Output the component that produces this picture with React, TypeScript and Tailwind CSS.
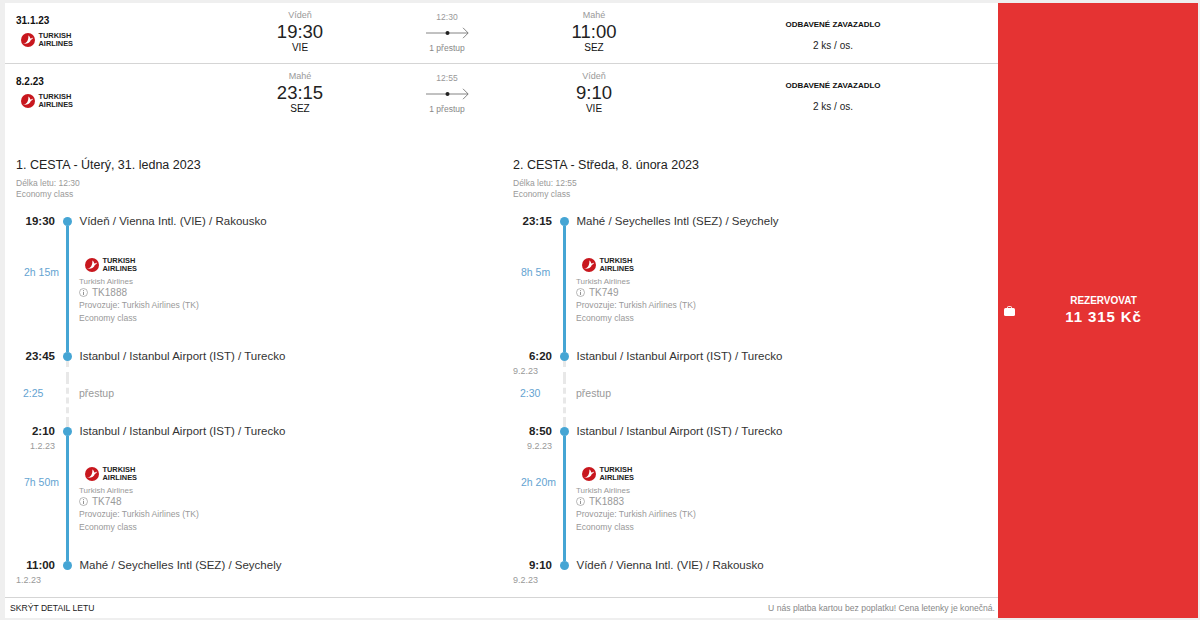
import React from 'react';

interface Leg {
  from: string;
  time: string;
  date?: string;
  duration: string;
  flight: string;
  topPad: string;
  legHeight: string;
}

interface Journey {
  title: string;
  length: string;
  legs: Leg[];
  transfer: { time: string; date?: string };
  transferTime: string;
  end: { time: string; date: string; place: string };
}

const IST = 'Istanbul / Istanbul Airport (IST) / Turecko';
const VIE = 'Vídeň / Vienna Intl. (VIE) / Rakousko';
const SEZ_OUT = 'Mahé / Seychelles Intl (SEZ) / Seychely';

const journeys: Journey[] = [
  {
    title: '1. CESTA - Úterý, 31. ledna 2023',
    length: 'Délka letu: 12:30',
    transfer: { time: '23:45' },
    transferTime: '2:25',
    legs: [
      { from: VIE, time: '19:30', duration: '2h 15m', flight: 'TK1888', topPad: 'pt-[1px]', legHeight: 'h-[105px]' },
      { from: IST, time: '2:10', date: '1.2.23', duration: '7h 50m', flight: 'TK748', topPad: 'pt-0', legHeight: 'h-[104px]' },
    ],
    end: { time: '11:00', date: '1.2.23', place: SEZ_OUT },
  },
  {
    title: '2. CESTA - Středa, 8. února 2023',
    length: 'Délka letu: 12:55',
    transfer: { time: '6:20', date: '9.2.23' },
    transferTime: '2:30',
    legs: [
      { from: SEZ_OUT, time: '23:15', duration: '8h 5m', flight: 'TK749', topPad: 'pt-[1px]', legHeight: 'h-[105px]' },
      { from: IST, time: '8:50', date: '9.2.23', duration: '2h 20m', flight: 'TK1883', topPad: 'pt-0', legHeight: 'h-[104px]' },
    ],
    end: { time: '9:10', date: '9.2.23', place: VIE },
  },
];

const TurkishLogo = () => (
  <div className="flex items-center gap-[3.5px] h-[15px]">
    <svg width="14" height="14" viewBox="0 0 14 14" className="shrink-0">
      <circle cx="7" cy="7" r="7" fill="#c8171e" />
      <path d="M2.400 10.600C5.400 10.200 7.600 7.600 7.400 2.400c1 .6 1.600 1.700 1.900 3 .9-.1 1.900-.4 2.900-1-.4 1.100-1.200 2-2.400 2.500-.7 2.600-3.800 4.500-7.800 3.700z" fill="#fff" />
    </svg>
    <div className="font-['Liberation_Sans',sans-serif] font-bold text-[7.4px] leading-[7.5px] text-[#222]">
      <div>TURKISH</div>
      <div>AIRLINES</div>
    </div>
  </div>
);

const FlightArrow = () => (
  <svg width="43" height="12" viewBox="0 0 43 12">
    <path d="M0 6h42M37 .8l5.200 5.200-5.200 5.200" fill="none" stroke="#666" strokeWidth="0.8" />
    <circle cx="21.500" cy="6" r="2" fill="#222" />
  </svg>
);

const Endpoint = ({ city, time, code }: { city: string; time: string; code: string }) => (
  <div className="flex flex-col items-center">
    <span className="text-[9px] leading-[13px] text-[#999]">{city}</span>
    <span className="text-[18.5px] leading-[20px] text-[#222]">{time}</span>
    <span className="text-[10px] leading-[12px] text-[#111]">{code}</span>
  </div>
);

const SummaryRow = ({ date, dep, arr, length, border }: {
  date: string;
  dep: string[];
  arr: string[];
  length: string;
  border?: boolean;
}) => (
  <div className={border ? 'flex h-[61px] border-b border-[#d5d5d5]' : 'flex h-[61px]'}>
    <div className="w-[221px] pl-[11px] pt-[12px]">
      <div className="text-[10px] leading-[12px] font-bold text-[#111]">{date}</div>
      <div className="pl-[5px] pt-[5px]"><TurkishLogo /></div>
    </div>
    <div className="w-[148px] pt-[6px]">
      <Endpoint city={dep[0]} time={dep[1]} code={dep[2]} />
    </div>
    <div className="w-[146px] pt-[8px] flex flex-col items-center">
      <span className="text-[8.5px] leading-[12px] text-[#999]">{length}</span>
      <div className="h-[19px] flex items-center"><FlightArrow /></div>
      <span className="text-[8.5px] leading-[12px] text-[#888]">1 přestup</span>
    </div>
    <div className="w-[148px] pt-[6px]">
      <Endpoint city={arr[0]} time={arr[1]} code={arr[2]} />
    </div>
    <div className="flex-1 pt-[16px] flex flex-col items-center">
      <span className="text-[8px] leading-[12px] font-bold text-[#111]">ODBAVENÉ ZAVAZADLO</span>
      <span className="text-[10px] leading-[12px] mt-[9px] text-[#222]">2 ks / os.</span>
    </div>
  </div>
);

const InfoIcon = () => (
  <svg width="9" height="9" viewBox="0 0 9 9" className="shrink-0">
    <circle cx="4.500" cy="4.500" r="4" fill="none" stroke="#999" strokeWidth="0.7" />
    <path d="M4.500 2v.9M4.500 3.800v3.200" stroke="#888" strokeWidth="0.9" />
  </svg>
);

const Stop = ({ time, date, dateLeft, place, above, below }: {
  time: string;
  date?: string;
  dateLeft?: boolean;
  place: string;
  above: string;
  below: string;
}) => (
  <div className="flex h-[30px]">
    <div className={dateLeft ? 'w-[40px] shrink-0 pr-[1px] flex flex-col' : 'w-[40px] shrink-0 pr-[1px] flex flex-col items-end'}>
      <span className="self-end text-[11.5px] leading-[16px] font-bold text-[#222]">{time}</span>
      {date && <span className="mt-[1px] text-[9px] leading-[12px] text-[#999]">{date}</span>}
    </div>
    <div className="w-[23px] shrink-0 flex flex-col items-center">
      <div className={above} />
      <div className="w-[9px] h-[9px] rounded-full bg-[#45a5d4] shrink-0" />
      <div className={below} />
    </div>
    <div className="pl-[0.5px] text-[11.5px] leading-[16px] text-[#333] whitespace-nowrap">{place}</div>
  </div>
);

const LegRow = ({ leg }: { leg: Leg }) => (
  <div className={`flex ${leg.legHeight}`}>
    <div className="w-[40px] shrink-0 pl-[8px] pt-[23px] text-[10.5px] leading-[12px] text-[#64a3d1] whitespace-nowrap">
      {leg.duration}
    </div>
    <div className="w-[23px] shrink-0 flex justify-center">
      <div className="w-[3px] h-full bg-[#45a5d4]" />
    </div>
    <div className={`pl-[6px] ${leg.topPad}`}>
      <div className="pt-[13px]"><TurkishLogo /></div>
      <div className="-ml-[6px] pt-[4px] text-[8.6px] leading-[11px] text-[#999]">
        <div className="text-[8px]">Turkish Airlines</div>
        <div className="flex items-center gap-[4px] text-[10px] leading-[11px]"><InfoIcon />{leg.flight}</div>
        <div className="mt-[0.5px] leading-[13px]">Provozuje: Turkish Airlines (TK)</div>
        <div className="leading-[13px]">Economy class</div>
      </div>
    </div>
  </div>
);

const JourneyColumn = ({ journey }: { journey: Journey }) => {
  const [first, second] = journey.legs;
  return (
    <div className="w-[497px] shrink-0">
      <div className="text-[12.5px] leading-[16px] text-[#222]">{journey.title}</div>
      <div className="pt-[5px] text-[8.5px] leading-[11px] text-[#999]">
        <div>{journey.length}</div>
        <div>Economy class</div>
      </div>
      <div className="pt-[13px]">
        <Stop time={first.time} place={first.from} above="h-[4px]" below="w-[3px] flex-1 bg-[#45a5d4]" />
        <LegRow leg={first} />
        <Stop
          time={journey.transfer.time}
          date={journey.transfer.date}
          dateLeft
          place={IST}
          above="w-[3px] h-[4px] bg-[#45a5d4]"
          below="w-0 flex-1 border-l-[3px] border-dashed border-[#e8e8e8]"
        />
        <div className="flex h-[45px]">
          <div className="w-[40px] shrink-0 pl-[7px] pt-[9px] text-[10.5px] leading-[12px] text-[#64a3d1]">{journey.transferTime}</div>
          <div className="w-[23px] shrink-0 flex justify-center">
            <div className="w-0 h-full border-l-[3px] border-dashed border-[#e8e8e8]" />
          </div>
          <div className="pt-[9px] text-[10.5px] leading-[12px] text-[#999]">přestup</div>
        </div>
        <Stop
          time={second.time}
          date={second.date}
          place={second.from}
          above="w-0 h-[4px] border-l-[3px] border-dashed border-[#e8e8e8]"
          below="w-[3px] flex-1 bg-[#45a5d4]"
        />
        <LegRow leg={second} />
        <Stop
          time={journey.end.time}
          date={journey.end.date}
          dateLeft
          place={journey.end.place}
          above="w-[3px] h-[4px] bg-[#45a5d4]"
          below="h-0"
        />
      </div>
    </div>
  );
};

const App: React.FC = () => (
  <div className="h-[620px] w-[1200px] overflow-hidden bg-[#efefef] pt-[3px] pb-[2px] pl-[5px] pr-[2px] flex font-['Liberation_Sans',sans-serif]">
    <div className="w-[993px] bg-white flex flex-col">
      <SummaryRow date="31.1.23" dep={['Vídeň', '19:30', 'VIE']} arr={['Mahé', '11:00', 'SEZ']} length="12:30" border />
      <SummaryRow date="8.2.23" dep={['Mahé', '23:15', 'SEZ']} arr={['Vídeň', '9:10', 'VIE']} length="12:55" />
      <div className="flex-1 flex pl-[11px] pt-[32px]">
        {journeys.map((j) => (
          <JourneyColumn key={j.title} journey={j} />
        ))}
      </div>
      <div className="h-[21px] border-t border-[#d5d5d5] flex items-center justify-between pl-[5px] pr-[3px]">
        <span className="text-[8.6px] text-[#222]">SKRÝT DETAIL LETU</span>
        <span className="text-[8.6px] text-[#888]">U nás platba kartou bez poplatku! Cena letenky je konečná.</span>
      </div>
    </div>
    <div className="flex-1 bg-[#e53333] flex items-center pl-[6px] pr-[6px] text-white">
      <svg width="11" height="10" viewBox="0 0 11 10" className="shrink-0">
        <path d="M3.500 2V1.200C3.500.7 3.900.5 4.300.5h2.400c.4 0 .8.2.8.7V2" fill="none" stroke="#fff" strokeWidth="0.9" />
        <rect x="0" y="2" width="11" height="8" rx="1.500" fill="#fff" />
      </svg>
      <div className="flex-1 flex flex-col items-center -mt-[1px]">
        <span className="text-[10px] leading-[14px] font-bold">REZERVOVAT</span>
        <span className="text-[15px] leading-[18px] font-bold tracking-[0.9px]">11 315 Kč</span>
      </div>
    </div>
  </div>
);

export default App;
